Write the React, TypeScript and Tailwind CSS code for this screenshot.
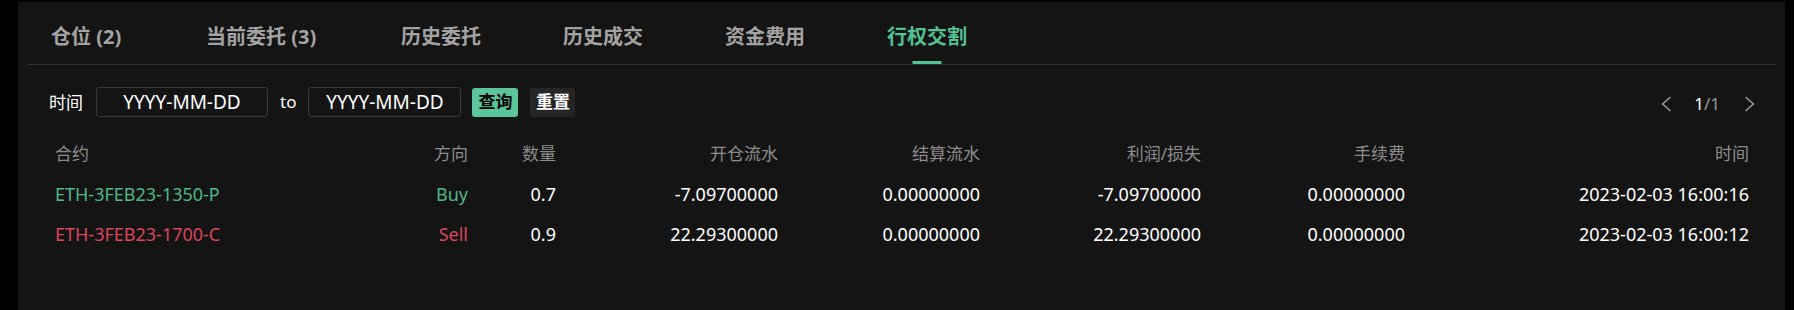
import React from "react";

const tabs: { label: string; w: string }[] = [
  { label: "仓位 (2)", w: "w-[73px]" },
  { label: "当前委托 (3)", w: "w-[113px]" },
  { label: "历史委托", w: "w-[80px]" },
  { label: "历史成交", w: "w-[80px]" },
  { label: "资金费用", w: "w-[80px]" },
  { label: "行权交割", w: "w-[80px]" },
];

type Row = {
  symbol: string;
  side: "Buy" | "Sell";
  qty: string;
  open: string;
  settle: string;
  pnl: string;
  fee: string;
  time: string;
};

const rows: Row[] = [
  {
    symbol: "ETH-3FEB23-1350-P",
    side: "Buy",
    qty: "0.7",
    open: "-7.09700000",
    settle: "0.00000000",
    pnl: "-7.09700000",
    fee: "0.00000000",
    time: "2023-02-03 16:00:16",
  },
  {
    symbol: "ETH-3FEB23-1700-C",
    side: "Sell",
    qty: "0.9",
    open: "22.29300000",
    settle: "0.00000000",
    pnl: "22.29300000",
    fee: "0.00000000",
    time: "2023-02-03 16:00:12",
  },
];

function Chevron({ dir }: { dir: "left" | "right" }) {
  return (
    <svg width="12" height="16" viewBox="0 0 12 16" fill="none">
      {dir === "left" ? (
        <polyline points="10,1.5 2.5,8 10,14.5" stroke="#9a9a9a" strokeWidth="1.6" strokeLinecap="round" strokeLinejoin="round" />
      ) : (
        <polyline points="2,1.5 9.5,8 2,14.5" stroke="#9a9a9a" strokeWidth="1.6" strokeLinecap="round" strokeLinejoin="round" />
      )}
    </svg>
  );
}

export default function App() {
  return (
    <div className="w-[1794px] h-[310px] bg-black pt-[2px] pl-[18px] overflow-hidden [font-family:'Noto_Sans','Noto_Sans_CJK_SC',sans-serif]">
      <div className="w-[1767px] h-[308px] bg-[#141414] px-[9px]">
        {/* Tabs */}
        <div className="h-[63px] border-b border-[#2f2f2f] flex pl-[24px] gap-[82px]">
          {tabs.map((t, i) => {
            const active = i === tabs.length - 1;
            return (
              <div key={t.label} className={"relative h-full flex items-center pt-[8px] whitespace-nowrap " + t.w}>
                <span
                  className={
                    "text-[20px] font-bold leading-none " +
                    (active ? "text-[#55c293]" : "text-[#a3a3a3]")
                  }
                >
                  {t.label}
                </span>
                {active && (
                  <div className="absolute bottom-0 left-1/2 -translate-x-1/2 w-[29px] h-[3px] bg-[#55c293]" />
                )}
              </div>
            );
          })}
        </div>

        {/* Filter row */}
        <div className="mt-[22px] h-[30px] flex items-center pl-[22px] pr-[20px]">
          <span className="text-[17px] text-white leading-none">时间</span>
          <div className="ml-[13px] w-[172px] h-[30px] border border-[#393939] rounded-[3px] flex items-center justify-center text-[19px] leading-none text-white">
            YYYY-MM-DD
          </div>
          <span className="ml-[12px] text-[17px] text-white">to</span>
          <div className="ml-[12px] w-[153px] h-[30px] border border-[#393939] rounded-[3px] flex items-center justify-center text-[19px] leading-none text-white">
            YYYY-MM-DD
          </div>
          <button className="ml-[11px] w-[46px] h-[29px] rounded-[3px] bg-[#5cc59b] text-black text-[17px] font-bold flex items-center justify-center">
            查询
          </button>
          <button className="ml-[12px] w-[45px] h-[29px] rounded-[3px] bg-[#252525] text-white text-[17px] font-bold flex items-center justify-center">
            重置
          </button>
          <div className="ml-auto flex items-center mt-[4px]">
            <Chevron dir="left" />
            <span className="ml-[22px] text-[17px] text-white">1</span>
            <span className="text-[17px] text-[#9a9a9a]">/1</span>
            <span className="ml-[24px]">
              <Chevron dir="right" />
            </span>
          </div>
        </div>

        {/* Table */}
        <div className="mt-[17px] pl-[28px]">
          <div className="flex h-[40px] items-center text-[17px] text-[#8c8c8c]">
            <div className="w-[300px]">合约</div>
            <div className="w-[113px] text-right">方向</div>
            <div className="w-[88px] text-right">数量</div>
            <div className="w-[222px] text-right">开仓流水</div>
            <div className="w-[202px] text-right">结算流水</div>
            <div className="w-[221px] text-right">利润/损失</div>
            <div className="w-[204px] text-right">手续费</div>
            <div className="w-[344px] text-right">时间</div>
          </div>
          {rows.map((r) => {
            const color = r.side === "Buy" ? "text-[#4fb887]" : "text-[#d9475a]";
            return (
              <div key={r.symbol} className="flex h-[40px] items-center text-[18px] text-white">
                <div className={"w-[300px] " + color}>{r.symbol}</div>
                <div className={"w-[113px] text-right " + color}>{r.side}</div>
                <div className="w-[88px] text-right">{r.qty}</div>
                <div className="w-[222px] text-right">{r.open}</div>
                <div className="w-[202px] text-right">{r.settle}</div>
                <div className="w-[221px] text-right">{r.pnl}</div>
                <div className="w-[204px] text-right">{r.fee}</div>
                <div className="w-[344px] text-right">{r.time}</div>
              </div>
            );
          })}
        </div>
      </div>
    </div>
  );
}
